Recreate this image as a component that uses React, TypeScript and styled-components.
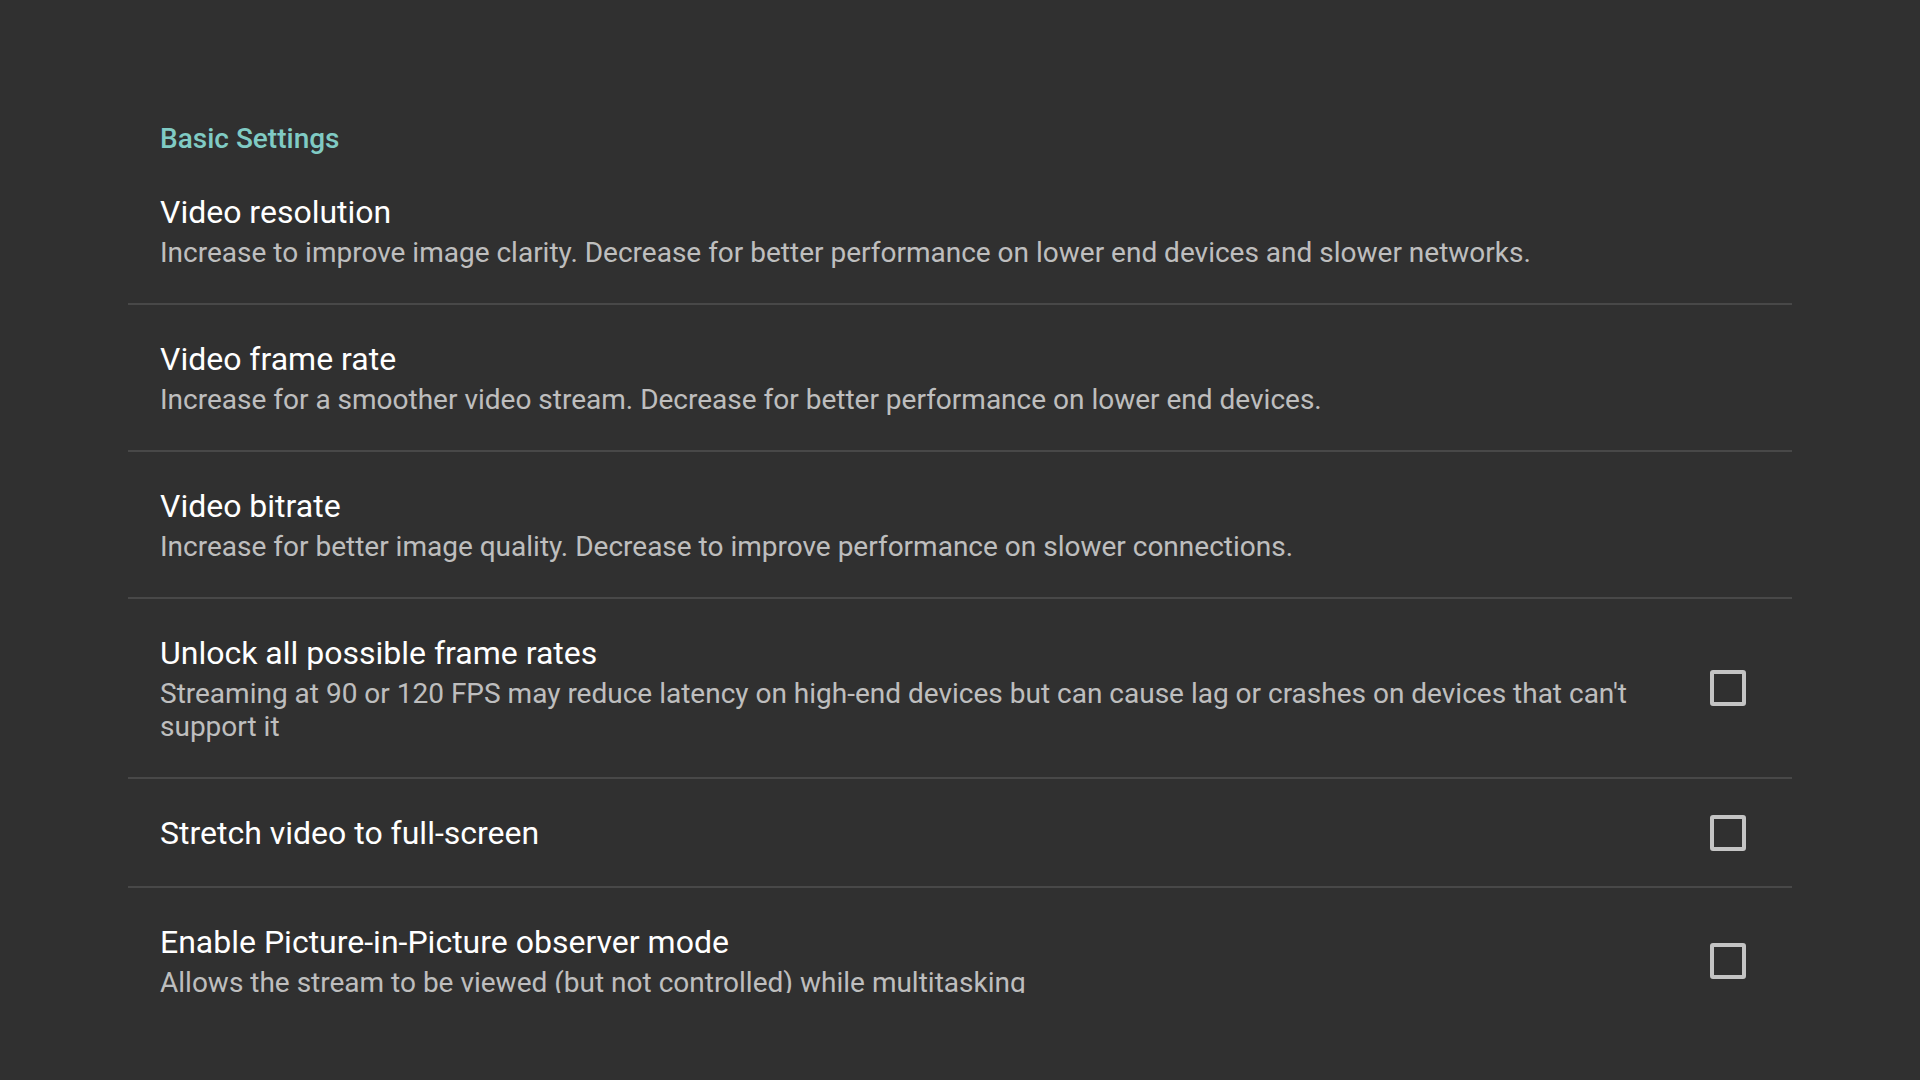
import React from "react";
import styled, { createGlobalStyle } from "styled-components";

const GlobalStyle = createGlobalStyle`
  html, body {
    margin: 0;
    padding: 0;
    background: #303030;
  }
  body {
    font-family: Roboto, "Noto Sans", "Liberation Sans", sans-serif;
    -webkit-font-smoothing: antialiased;
  }
`;

const Page = styled.div`
  width: 1920px;
  height: 1080px;
  background: #303030;
  display: flex;
  flex-direction: column;
`;

const Scroller = styled.div`
  height: 993px;
  overflow: hidden;
  padding: 0 128px;
  display: flex;
  flex-direction: column;
`;

const CategoryTitle = styled.div`
  padding: 122px 32px 3px;
  font-size: 28px;
  line-height: 33px;
  font-weight: 500;
  color: #80cbc4;
`;

const Row = styled.div<{ $divider: boolean }>`
  display: flex;
  align-items: center;
  flex-shrink: 0;
  min-height: ${(p) => (p.$divider ? 147 : 145)}px;
  box-sizing: border-box;
  padding: 34px 46px 34px 32px;
  border-bottom: ${(p) => (p.$divider ? "2px solid #484848" : "none")};
`;

const CompactRow = styled(Row)`
  min-height: ${(p) => (p.$divider ? 109 : 107)}px;
`;

const TextBlock = styled.div`
  flex: 1;
  min-width: 0;
  display: flex;
  flex-direction: column;
  padding-top: 1px;
`;

const Title = styled.div`
  font-size: 32px;
  line-height: 38px;
  color: #ffffff;
`;

const Summary = styled.div`
  margin-top: 5px;
  font-size: 28px;
  line-height: 33px;
  color: rgba(255, 255, 255, 0.7);
`;

const Widget = styled.div`
  margin-left: 32px;
  width: 36px;
  height: 36px;
  flex-shrink: 0;
`;

const CheckBox = styled.div`
  width: 36px;
  height: 36px;
  box-sizing: border-box;
  border: 4px solid #c4c4c4;
  border-radius: 3px;
`;

type Pref = {
  title: string;
  summary?: string;
  checkbox?: boolean;
};

const prefs: Pref[] = [
  {
    title: "Video resolution",
    summary:
      "Increase to improve image clarity. Decrease for better performance on lower end devices and slower networks.",
  },
  {
    title: "Video frame rate",
    summary:
      "Increase for a smoother video stream. Decrease for better performance on lower end devices.",
  },
  {
    title: "Video bitrate",
    summary:
      "Increase for better image quality. Decrease to improve performance on slower connections.",
  },
  {
    title: "Unlock all possible frame rates",
    summary:
      "Streaming at 90 or 120 FPS may reduce latency on high-end devices but can cause lag or crashes on devices that can't support it",
    checkbox: true,
  },
  {
    title: "Stretch video to full-screen",
    checkbox: true,
  },
  {
    title: "Enable Picture-in-Picture observer mode",
    summary: "Allows the stream to be viewed (but not controlled) while multitasking",
    checkbox: true,
  },
];

export default function App() {
  return (
    <>
      <GlobalStyle />
      <Page>
        <Scroller>
          <CategoryTitle>Basic Settings</CategoryTitle>
          {prefs.map((p, i) => {
            const RowComp = p.summary ? Row : CompactRow;
            return (
              <RowComp key={p.title} $divider={i < prefs.length - 1}>
                <TextBlock>
                  <Title>{p.title}</Title>
                  {p.summary && <Summary>{p.summary}</Summary>}
                </TextBlock>
                {p.checkbox && (
                  <Widget>
                    <CheckBox />
                  </Widget>
                )}
              </RowComp>
            );
          })}
        </Scroller>
      </Page>
    </>
  );
}
